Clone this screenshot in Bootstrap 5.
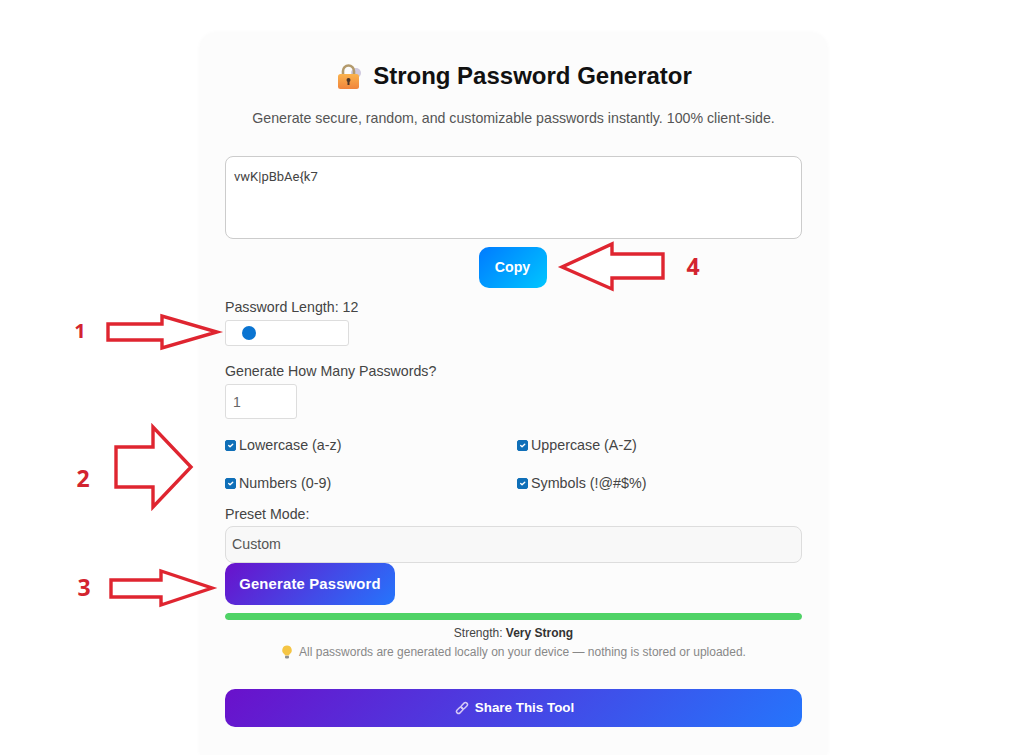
<!DOCTYPE html>
<html lang="en">
<head>
<meta charset="utf-8">
<title>Strong Password Generator</title>
<link href="https://cdn.jsdelivr.net/npm/bootstrap@5.3.0/dist/css/bootstrap.min.css" rel="stylesheet">
<style>
html,body{height:755px;overflow:hidden}
body{background:#fff;font-family:"Liberation Sans",Arial,sans-serif;color:#333;position:relative}
.tool-card{width:627px;margin:33px 0 0 200px;padding:25px;height:722px;background:#fcfcfc;border-radius:16px 16px 0 0;box-shadow:0 0 5px rgba(0,0,0,.03)}
.tool-title{font-size:24px;font-weight:700;line-height:36px;color:#111;margin:0;padding-left:2px;gap:11px}
.tool-sub{font-size:14.2px;line-height:20px;color:#555;margin:14px 0 28px}
.pw-box{height:83px;border:1px solid #ccc;border-radius:8px;padding:10px 8px;font:13px/20px Roboto,sans-serif;color:#444;resize:none;box-shadow:none}
.btn-copy{width:68px;height:41px;margin:8px 2px 0 0;padding:0;border:0;border-radius:10px;background:linear-gradient(135deg,#007bff,#00c6ff);color:#fff;font-size:14.2px;font-weight:700}
.fld-label{display:block;font-size:14.2px;line-height:18px;color:#444;margin:0}
.len-label{margin-top:10px}
.len-range{display:block;width:124px;height:26px;margin:4px 0 16px;padding:0 10px;background:#fff;border:1px solid #ddd;border-radius:3px}
.len-range::-webkit-slider-runnable-track{background:transparent;height:14px}
.len-range::-webkit-slider-thumb{width:14px;height:14px;margin-top:0;background:#0a74d1;border-radius:50%}
.count-box{width:72px;height:35px;margin-top:4px;padding:0 7px;border:1px solid #ddd;border-radius:3px;font-size:14px;color:#666;box-shadow:none}
.opt-grid{display:grid;grid-template-columns:285px 285px;column-gap:7px;row-gap:20px;margin-top:18px}
.opt-item{display:flex;align-items:center;height:18px;gap:3px;font-size:14.3px;color:#444}
.opt-item .form-check-input{width:11px;height:11px;margin:0 0 2px;border-radius:2px;flex:none;background-color:#0f6fb8;border-color:#0f6fb8;background-size:100%}
.preset-label{margin-top:12px}
.preset-box{height:37px;margin-top:3px;padding:1px 6px 0;border:1px solid #ddd;border-radius:8px;background:#f8f8f8;font-size:14.2px;color:#555;box-shadow:none;background-image:none}
.btn-gen{display:block;width:170px;height:42px;padding:0;border:0;border-radius:10px;background:linear-gradient(135deg,#6a11cb,#2575fc);color:#fff;font-size:14.8px;font-weight:700;letter-spacing:.2px}
.meter{height:7px;margin-top:8px;border-radius:4px;background:#e9e9e9}
.meter .progress-bar{background:#4fd366;border-radius:4px}
.strength-text{font-size:12px;line-height:16px;margin:5px 0 0;color:#444}
.strength-text b{color:#333}
.note-text{font-size:12px;line-height:16px;margin:3px 0 0;color:#888;gap:6px}
.btn-share{width:100%;height:38px;margin-top:29px;padding:0 0 0 2px;border:0;border-radius:10px;background:linear-gradient(135deg,#6a11cb,#2575fc);color:#fff;font-size:13.4px;font-weight:700;gap:6px}
.annot-layer{position:absolute;left:0;top:0;pointer-events:none}
.annot-layer polygon{fill:#fff;stroke:#df2530;stroke-width:3.4;stroke-linejoin:miter}
.annot-layer text{fill:#d3242f;font:700 23px "Open Sans",sans-serif;text-anchor:middle}
.annot-layer text.num-small{font-size:20px}
</style>
</head>
<body>
<main class="tool-card">
  <h1 class="tool-title d-flex justify-content-center align-items-center">
    <svg width="25" height="25" viewBox="0 0 25 25" aria-hidden="true">
      <circle cx="19" cy="9" r="5" fill="#cfc9de"/><rect x="17.500" y="11" width="3.500" height="10" fill="#cfc9de"/>
      <path d="M6 12V7a5.500 5.500 0 0 1 11 0v5" fill="none" stroke="#b39a6c" stroke-width="2.600"/>
      <defs><linearGradient id="lk" x1="0" y1="0" x2="0" y2="1"><stop offset="0" stop-color="#fbb34d"/><stop offset="1" stop-color="#f0843c"/></linearGradient></defs>
      <rect x="1" y="10" width="21" height="15" rx="2.500" fill="url(#lk)"/>
      <circle cx="11.500" cy="16" r="2" fill="#4a3428"/><rect x="10.500" y="16" width="2" height="5" fill="#4a3428"/>
    </svg>
    <span>Strong Password Generator</span>
  </h1>
  <p class="tool-sub text-center">Generate secure, random, and customizable passwords instantly. 100% client-side.</p>
  <textarea class="form-control pw-box" aria-label="Generated password">vwK|pBbAe{k7</textarea>
  <div class="text-center"><button class="btn btn-copy" type="button">Copy</button></div>
  <label class="fld-label len-label" for="len">Password Length: 12</label>
  <input id="len" class="form-range len-range" type="range" min="8" max="64" value="12">
  <label class="fld-label" for="cnt">Generate How Many Passwords?</label>
  <input id="cnt" class="form-control count-box" type="text" value="1">
  <div class="opt-grid">
    <label class="opt-item"><input class="form-check-input" type="checkbox" checked>Lowercase (a-z)</label>
    <label class="opt-item"><input class="form-check-input" type="checkbox" checked>Uppercase (A-Z)</label>
    <label class="opt-item"><input class="form-check-input" type="checkbox" checked>Numbers (0-9)</label>
    <label class="opt-item"><input class="form-check-input" type="checkbox" checked>Symbols (!@#$%)</label>
  </div>
  <label class="fld-label preset-label" for="preset">Preset Mode:</label>
  <select id="preset" class="form-select preset-box"><option>Custom</option></select>
  <button class="btn btn-gen" type="button">Generate Password</button>
  <div class="progress meter"><div class="progress-bar w-100"></div></div>
  <p class="strength-text text-center">Strength: <b>Very Strong</b></p>
  <p class="note-text d-flex justify-content-center align-items-center">
    <svg width="12" height="14" viewBox="0 0 12 14" aria-hidden="true">
      <path d="M6 .5a4.700 4.700 0 0 0-2.800 8.500c.5.4.7.9.7 1.500h4.200c0-.6.2-1.100.7-1.500A4.700 4.700 0 0 0 6 .5z" fill="#f5c544"/>
      <rect x="4" y="10.800" width="4" height="2.600" rx=".8" fill="#8f8f8f"/>
    </svg>
    <span>All passwords are generated locally on your device — nothing is stored or uploaded.</span>
  </p>
  <button class="btn btn-share d-flex justify-content-center align-items-center" type="button">
    <svg width="14" height="14" viewBox="0 0 14 14" fill="none" stroke="#d5c8f5" stroke-width="1.500" aria-hidden="true">
      <rect x="-3.600" y="-2" width="7.200" height="4" rx="2" transform="translate(4.700 9.300) rotate(-45)"/>
      <rect x="-3.600" y="-2" width="7.200" height="4" rx="2" transform="translate(9.300 4.700) rotate(-45)"/>
    </svg>
    <span>Share This Tool</span>
  </button>
</main>
<svg class="annot-layer" width="1024" height="755" viewBox="0 0 1024 755">
  <polygon points="108,324 162,324 162,316 217,332 162,348 162,340 108,340"/>
  <polygon points="116,447 153,447 153,427 191,467 153,507 153,487 116,487"/>
  <polygon points="111,580 161,580 161,571 212,588 161,605 161,597 111,597"/>
  <polygon points="663,254 612,254 612,244 562,267 612,289 612,278 663,278"/>
  <text class="num-small" x="80" y="338">1</text>
  <text x="83" y="487">2</text>
  <text x="84" y="596">3</text>
  <text x="693" y="275">4</text>
</svg>
<script src="https://cdn.jsdelivr.net/npm/bootstrap@5.3.0/dist/js/bootstrap.bundle.min.js"></script>
</body>
</html>
